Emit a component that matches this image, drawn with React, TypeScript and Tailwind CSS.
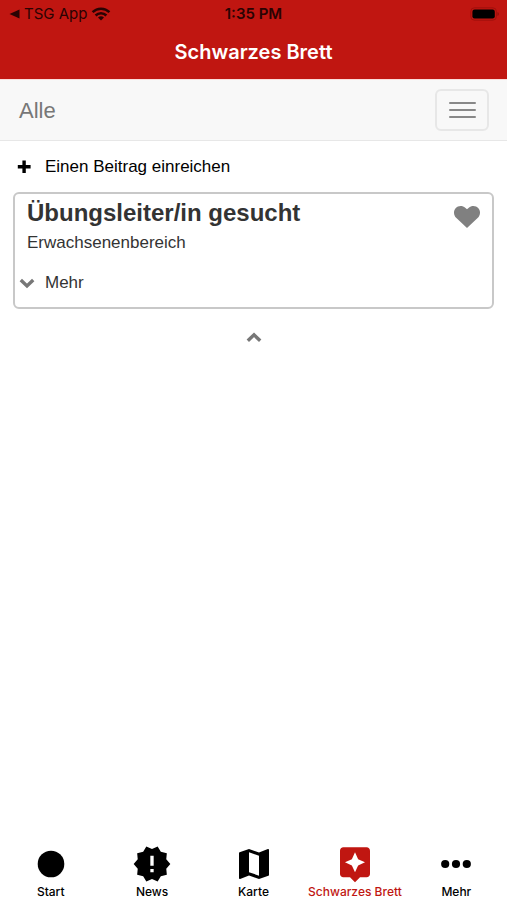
import React, { useState } from 'react';
import { MdMap, MdNewReleases, MdAssistant } from 'react-icons/md';

interface Tab {
    label: string;
    icon: React.ReactNode;
}

const tabs: Tab[] = [
    {
        label: 'Start',
        icon: (
            <svg viewBox="0 0 40 40" className="w-10 h-10" fill="currentColor">
                <circle cx="20" cy="20" r="13.3" />
            </svg>
        ),
    },
    { label: 'News', icon: <MdNewReleases className="w-10 h-10" /> },
    { label: 'Karte', icon: <MdMap className="w-10 h-10" /> },
    { label: 'Schwarzes Brett', icon: <MdAssistant className="w-10 h-10" /> },
    {
        label: 'Mehr',
        icon: (
            <svg viewBox="0 0 40 40" className="w-10 h-10" fill="currentColor">
                <circle cx="9.2" cy="20" r="4.1" />
                <circle cx="20" cy="20" r="4.1" />
                <circle cx="30.8" cy="20" r="4.1" />
            </svg>
        ),
    },
];

const Chevron: React.FC<{ up?: boolean }> = ({ up }) => (
    <svg viewBox="0 0 16 16" className="w-4 h-4" fill="none" stroke="currentColor" strokeWidth="3.4">
        <path d={up ? 'M1.8 11.8 8 5.8l6.2 6' : 'M1.8 5 8 11l6.2-6'} />
    </svg>
);

const StatusBar: React.FC = () => (
    <div className="grid grid-cols-3 items-center h-7 px-2 text-sm text-[#2a0303]">
        <div className="flex items-center gap-1 text-[15px]">
            <svg viewBox="0 0 12 12" className="w-3 h-3" fill="currentColor">
                <path d="M1.5 6 11.5 1.5v9z" />
            </svg>
            <span>TSG App</span>
            <svg viewBox="0 0 20 14" className="w-5 h-3.5" fill="none" stroke="currentColor" strokeWidth="2.5">
                <path d="M1.6 5.2a12 12 0 0 1 16.8 0" />
                <path d="M4.6 8.5a7.6 7.6 0 0 1 10.8 0" />
                <path d="M10 13.6 7 10.6a4.3 4.3 0 0 1 6 0z" fill="currentColor" stroke="none" />
            </svg>
        </div>
        <span className="text-center text-[15px] font-semibold">1:35 PM</span>
        <svg viewBox="0 0 30 14" className="w-[30px] h-3.5 justify-self-end">
            <rect x="1.8" y="0.8" width="25.6" height="12.4" rx="3.6" fill="none" stroke="#a0100c" strokeWidth="1" />
            <rect x="3.4" y="2.6" width="22.4" height="8.8" rx="2.2" fill="#000" />
            <path d="M28.6 5v4c1.4-.6 1.4-3.4 0-4z" fill="#7c0d0a" />
        </svg>
    </div>
);

const App: React.FC = () => {
    const [activeTab, setActiveTab] = useState('Schwarzes Brett');

    return (
        <div className="flex flex-col min-h-screen bg-white font-['Liberation_Sans',Arial,sans-serif]">
            <header className="bg-[#c01611] font-[Inter,sans-serif]">
                <StatusBar />
                <h1 className="pt-2.5 pb-[13px] text-xl leading-7 font-semibold text-center text-white">
                    Schwarzes Brett
                </h1>
            </header>

            <nav className="flex items-center justify-between py-2 pl-[19px] pr-[18px] bg-[#f8f8f8] border-y border-[#e7e7e7] border-t-[#fbdcda]">
                <a href="#alle" className="text-[22px] text-[#777777]">Alle</a>
                <button
                    type="button"
                    aria-label="Menü"
                    className="flex flex-col items-center justify-center gap-[5px] w-[54px] h-[42px] my-px border-2 border-[#e7e7e7] rounded-md"
                >
                    <span className="w-[27px] h-[2px] bg-[#888888] rounded-full" />
                    <span className="w-[27px] h-[2px] bg-[#888888] rounded-full" />
                    <span className="w-[27px] h-[2px] bg-[#888888] rounded-full" />
                </button>
            </nav>

            <main className="flex-1 px-[13px]">
                <button type="button" className="flex items-center gap-3 h-[51px] pl-1 text-[17px] text-black">
                    <svg viewBox="0 0 16 16" className="w-4 h-4" fill="currentColor">
                        <path d="M5.4 1.4h3.4v4.5h4.8v3.6H8.8V14H5.4V9.5H.8V5.9h4.6z" />
                    </svg>
                    Einen Beitrag einreichen
                </button>

                <article className="flex items-start justify-between px-3 pb-3 border-2 border-[#c8c8c8] rounded-md text-[#333333]">
                    <div>
                        <h2 className="pt-px text-2xl font-bold leading-9">Übungsleiter/in gesucht</h2>
                        <p className="text-[17px] leading-6">Erwachsenenbereich</p>
                        <button type="button" className="flex items-center gap-2.5 mt-4 -ml-2 text-[17px] leading-6">
                            <span className="text-[#777777]"><Chevron /></span>
                            Mehr
                        </button>
                    </div>
                    <button type="button" aria-label="Merken" className="pt-3 text-[#808080]">
                        <svg viewBox="0 0 26 22" className="w-[26px] h-[22px]" fill="currentColor">
                            <path d="M13 22 2.4 12C-.6 9-.7 4.700 1.600 2.200 4.200-.6 8.600-.5 11.200 1.700L13 3.300l1.800-1.600c2.600-2.200 7-2.300 9.600.5 2.300 2.500 2.200 6.800-.8 9.800z" />
                        </svg>
                    </button>
                </article>

                <button type="button" aria-label="Nach oben" className="block mx-auto mt-5 text-[#777777]">
                    <Chevron up />
                </button>
            </main>

            <footer className="flex font-[Inter,sans-serif]">
                {tabs.map((tab) => (
                    <button
                        key={tab.label}
                        type="button"
                        onClick={() => setActiveTab(tab.label)}
                        className={`flex flex-1 basis-0 flex-col items-center text-xs font-medium whitespace-nowrap ${
                            activeTab === tab.label ? 'text-[#c01611]' : 'text-black'
                        }`}
                    >
                        {tab.icon}
                        {tab.label}
                    </button>
                ))}
            </footer>
        </div>
    );
};

export default App;
